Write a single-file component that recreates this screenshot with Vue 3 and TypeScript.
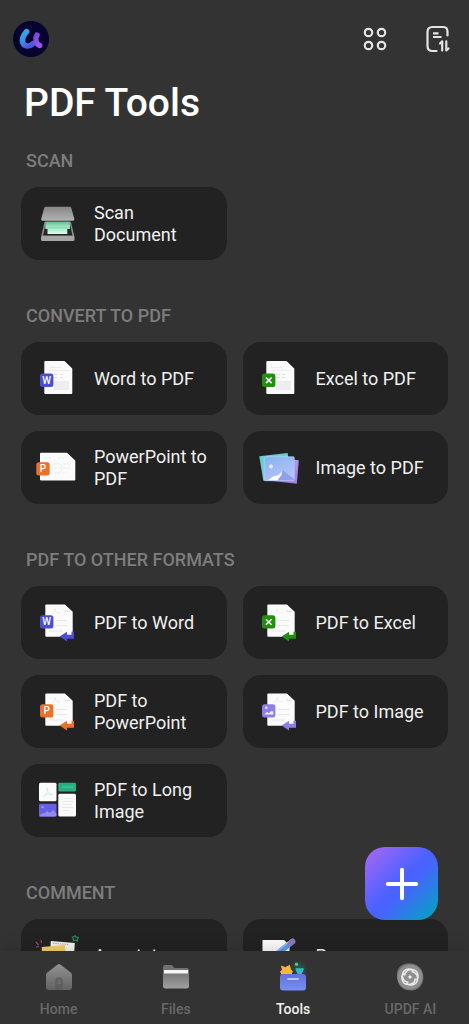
<script setup lang="ts">
interface Tool {
  id: string
  label: string
  kind: 'scan' | 'doc' | 'slide' | 'export' | 'photos' | 'long' | 'note' | 'sign'
  color?: string
  mark?: 'W' | 'X' | 'P' | 'image'
}

interface Section {
  title: string
  tools: Tool[]
}

const blue = '#4c50d0'
const green = '#22900f'
const orange = '#ea7127'
const violet = '#8f7ee6'

const sections: Section[] = [
  { title: 'SCAN', tools: [{ id: 'scan', label: 'Scan Document', kind: 'scan' }] },
  {
    title: 'CONVERT TO PDF',
    tools: [
      { id: 'word-pdf', label: 'Word to PDF', kind: 'doc', color: blue, mark: 'W' },
      { id: 'excel-pdf', label: 'Excel to PDF', kind: 'doc', color: green, mark: 'X' },
      { id: 'ppt-pdf', label: 'PowerPoint to PDF', kind: 'slide', color: orange, mark: 'P' },
      { id: 'image-pdf', label: 'Image to PDF', kind: 'photos' },
    ],
  },
  {
    title: 'PDF TO OTHER FORMATS',
    tools: [
      { id: 'pdf-word', label: 'PDF to Word', kind: 'export', color: blue, mark: 'W' },
      { id: 'pdf-excel', label: 'PDF to Excel', kind: 'export', color: green, mark: 'X' },
      { id: 'pdf-ppt', label: 'PDF to PowerPoint', kind: 'export', color: orange, mark: 'P' },
      { id: 'pdf-image', label: 'PDF to Image', kind: 'export', color: violet, mark: 'image' },
      { id: 'pdf-long', label: 'PDF to Long Image', kind: 'long' },
    ],
  },
  {
    title: 'COMMENT',
    tools: [
      { id: 'annotate', label: 'Annotate', kind: 'note' },
      { id: 'process', label: 'Process', kind: 'sign' },
    ],
  },
]

const badgeOrigin: Record<string, string> = {
  doc: 'translate(4 16.5)',
  slide: 'translate(0.3 16.2)',
  export: 'translate(4 14.2)',
}

const tabs = ['Home', 'Files', 'Tools', 'UPDF AI']
const activeTab = 'Tools'
</script>

<template>
  <div class="app">
    <main class="content">
      <header class="topbar">
        <button class="icon-button" type="button" aria-label="Account">
          <svg width="36" height="36" viewBox="0 0 36 36">
            <defs>
              <linearGradient id="logoA" x1="0.3" y1="0" x2="0.7" y2="1">
                <stop offset="0" stop-color="#35a6ea" />
                <stop offset="0.55" stop-color="#3d8ce8" />
                <stop offset="1" stop-color="#5450e0" />
              </linearGradient>
              <linearGradient id="logoB" x1="0" y1="0" x2="0.4" y2="1">
                <stop offset="0" stop-color="#7746de" />
                <stop offset="1" stop-color="#9c55ea" />
              </linearGradient>
            </defs>
            <circle cx="18" cy="18" r="18" fill="#06042e" />
            <path d="M13.6 10.6C10.5 14 8.6 18.5 10 22C11.5 25.8 16.5 26 20 22.8" fill="none" stroke="url(#logoA)" stroke-width="5.6" stroke-linecap="round" stroke-linejoin="round" />
            <path d="M24 14C22 17 22.3 22.5 26.7 24.5" fill="none" stroke="url(#logoB)" stroke-width="5.4" stroke-linecap="round" />
          </svg>
        </button>
        <div class="actions">
          <button class="icon-button" type="button" aria-label="Grid view">
            <svg width="26" height="26" viewBox="0 0 26 26" fill="none" stroke="#e4e4e4" stroke-width="2.2">
              <circle cx="6.5" cy="6.5" r="3.7" />
              <circle cx="19.5" cy="6.5" r="3.7" />
              <circle cx="6.5" cy="19.5" r="3.7" />
              <circle cx="19.5" cy="19.5" r="3.7" />
            </svg>
          </button>
          <button class="icon-button" type="button" aria-label="Sort">
            <svg width="26" height="28" viewBox="0 0 26 28" fill="none" stroke="#e4e4e4" stroke-width="2.2" stroke-linecap="round" stroke-linejoin="round">
              <path d="M11.5 26H7.5Q2.5 26 2.5 21V7Q2.5 2 7.5 2H18.5Q22.5 2 22.5 7V10.5" />
              <path d="M8 8.3H13.5M8 12H16.5" stroke-linecap="butt" />
              <path d="M15 18.5L17.2 16.3V25.5M21.3 16.3V25.5L23.5 23.5" />
            </svg>
          </button>
        </div>
      </header>

      <h1>PDF Tools</h1>

      <section v-for="section in sections" :key="section.title" class="section">
        <h2>{{ section.title }}</h2>
        <div class="grid">
          <button v-for="tool in section.tools" :key="tool.id" class="card" type="button">
            <svg class="card-icon" width="43" height="43" viewBox="0 0 43 43" aria-hidden="true">
              <template v-if="tool.kind === 'scan'">
                <defs>
                  <linearGradient id="lid" x1="0" y1="0" x2="0" y2="1">
                    <stop offset="0" stop-color="#858585" />
                    <stop offset="1" stop-color="#b4b4b4" />
                  </linearGradient>
                  <linearGradient id="glow" x1="0" y1="0" x2="0" y2="1">
                    <stop offset="0" stop-color="#69b592" />
                    <stop offset="0.45" stop-color="#a5e9c6" />
                    <stop offset="0.5" stop-color="#6ddba5" />
                    <stop offset="0.6" stop-color="#a8efcc" />
                    <stop offset="1" stop-color="#e4f8ee" />
                  </linearGradient>
                </defs>
                <path d="M8.5 20L5 35H38.5L35 20Z" fill="#8d8d8d" />
                <path d="M9.8 20L7.2 33.5H36.3L33.7 20Z" fill="#262626" />
                <path d="M9.3 19.5H34V27H31.3V32H11.5V27H9.3Z" fill="url(#glow)" />
                <path d="M9.8 4.7H33.7Q35 4.7 35.3 6L38.3 16.7Q38.5 18.7 37 18.7H6.5Q5 18.7 5.2 16.7L8.2 6Q8.6 4.7 9.8 4.7Z" fill="url(#lid)" />
                <rect x="5" y="34" width="33.5" height="5" rx="1.5" fill="#a6a6a6" />
              </template>

              <template v-else-if="tool.kind === 'doc'">
                <path d="M9.3 4H28.3L36.3 11.7V36Q36.3 37 35.3 37H9.3Q8.3 37 8.3 36V5Q8.3 4 9.3 4Z" fill="#fbfbfb" />
                <path d="M28.3 4L36.3 11.7H29.3Q28.3 11.7 28.3 10.7Z" fill="#fff" />
                <path d="M13 10.5H25M13 13.5H33" stroke="#ededf0" />
                <path d="M18 17.5H22M24 17.5H27M18 20.5H22M24 20.5H27" stroke="#e2e2e6" />
                <rect x="18" y="24" width="15" height="9" fill="#eeeef0" />
              </template>

              <template v-else-if="tool.kind === 'slide'">
                <path d="M5 6.8H30.7L39.3 14.8V33.5Q39.3 34.5 38.3 34.5H5Q4 34.5 4 33.5V7.8Q4 6.8 5 6.8Z" fill="#fbfbfb" />
                <path d="M30.7 6.8L39.3 14.8H31.7Q30.7 14.8 30.7 13.8Z" fill="#fff" />
                <path d="M8 12H16M22 12H28M18 18H24M27 18H34M18 22H25M27 22H35M18 27H32" stroke="#ebebed" stroke-dasharray="3 1" />
                <circle cx="21" cy="22" r="5" fill="none" stroke="#f0f0f2" />
              </template>

              <template v-else-if="tool.kind === 'export'">
                <path d="M10.3 3.5H28.7L36.7 11V33Q36.7 35.8 34 35.8H10.3Q9.3 35.8 9.3 34.8V4.5Q9.3 3.5 10.3 3.5Z" fill="#fbfbfb" />
                <path d="M28.7 3.5L36.7 11H29.7Q28.7 11 28.7 10Z" fill="#fff" />
                <path d="M16 13C19 12 20 8 19 7.5C18 8 20 12 24 12" stroke="#ebebee" fill="none" />
                <path d="M29 8.5V10.5H34" stroke="#e0e0e4" fill="none" />
                <path d="M20 19.5H31M20 24.5H31M13 30H27" stroke="#e8e8eb" />
                <path d="M23.6 35.6L31 30.8V33.8H35.5V30.8H38V37.7H31V40.6Z" :fill="tool.color" />
              </template>

              <template v-else-if="tool.kind === 'photos'">
                <defs>
                  <linearGradient id="photo" x1="0" y1="0" x2="0.5" y2="1">
                    <stop offset="0" stop-color="#86b2ee" />
                    <stop offset="1" stop-color="#b4c3fb" />
                  </linearGradient>
                  <linearGradient id="photoBack" x1="0" y1="0" x2="0" y2="1">
                    <stop offset="0" stop-color="#b49be8" />
                    <stop offset="1" stop-color="#a27be6" />
                  </linearGradient>
                </defs>
                <path d="M1.3 10.3L29.7 7L32.7 31L5.3 34.8Z" fill="#67cfcc" />
                <path d="M10 10.5L40.8 14.3L38.8 37.8L8 34.3Z" fill="url(#photoBack)" />
                <rect x="6.2" y="10.7" width="30" height="24" rx="1" fill="url(#photo)" stroke="#b7dafb" stroke-width="0.6" />
                <path d="M19 34.3L25 24.5Q30 28 36 33V34.3Z" fill="#8da1ec" />
                <path d="M9.5 34.3C13 33 14 30 17 30C20 30 22 28 24 25L23.5 29L19.5 34.3Z" fill="#fff" />
                <circle cx="13" cy="20.5" r="2" fill="#dcecff" />
              </template>

              <template v-else-if="tool.kind === 'long'">
                <rect x="3" y="3.8" width="17.5" height="18.4" rx="1.5" fill="#fbfbfb" />
                <path d="M7.5 17.5C11 16 12.5 10 11 8.5C10 11 13 15.5 17 15.5C13 14.5 10 15.5 7.5 17.5" stroke="#d9ebe3" fill="none" />
                <rect x="22.3" y="3.8" width="17.7" height="8.7" rx="1.2" fill="#27ae83" />
                <path d="M26 8H37" stroke="#48c59b" stroke-width="1.4" />
                <rect x="3" y="24.8" width="17.5" height="12.7" rx="1.2" fill="#6760e4" />
                <circle cx="6.5" cy="28.2" r="1.1" fill="#a29df5" />
                <path d="M3.5 37C7 32 9 36 11 32L14 34L17 31L20.4 34.5V36.5Q20 37.5 19 37.5H4Z" fill="#938cf0" />
                <rect x="22.3" y="14.8" width="17.7" height="22.7" rx="1.5" fill="#fbfbfb" />
                <path d="M27 19.5H36M25.5 22.5H37M27 25.5H36M25.5 28.5H37M27 31.5H33" stroke="#e8e8ea" />
              </template>

              <template v-else-if="tool.kind === 'note'">
                <path d="M14.8 7L38.8 9L37 40H13Z" fill="#f3f3ee" />
                <path d="M17 9.3L33 10.5" stroke="#a9ad9f" stroke-dasharray="1.5 0.8" />
                <path d="M5.7 13L29 11L31.5 40H7Z" fill="#f4cd6c" />
                <path d="M38.9 1.7L40.4 3.2L42.2 3.5L41.3 5.1L41.4 7L39.4 6.2L37.3 6.8L37.5 4.8L36.3 3.2L38 2.8Z" fill="none" stroke="#258e5a" stroke-width="1.2" />
                <path d="M0 8L2.5 11M5 6L5.5 9M0 13L3 12.5" stroke="#9c4a80" stroke-width="1.2" />
              </template>

              <template v-else>
                <path d="M4.5 6H26L31.5 11V40H4.5Z" fill="#fafafa" />
                <path d="M34.5 7.5L17 21.5" stroke="#5f9be8" stroke-width="5.6" stroke-linecap="round" />
                <path d="M32 7L18 18" stroke="#91c0f3" stroke-width="1.5" />
                <path d="M34.5 7.5L32.8 9" stroke="#9376b8" stroke-width="5.6" stroke-linecap="round" />
              </template>

              <g v-if="tool.mark" :transform="badgeOrigin[tool.kind]">
                <rect width="13.4" height="13.4" rx="2.5" :fill="tool.color" />
                <path v-if="tool.mark === 'X'" d="M4 4L9.6 9.6M9.6 4L4 9.6" stroke="#fff" stroke-width="1.5" />
                <g v-else-if="tool.mark === 'image'" fill="#f1edff">
                  <circle cx="4.3" cy="3.6" r="1.2" />
                  <path d="M2.3 10.3L5 7.8L7 9L9.2 6.7L11.3 7.3V10.3Z" />
                </g>
                <text v-else class="mark" x="6.7" y="10.2" text-anchor="middle">{{ tool.mark }}</text>
              </g>
            </svg>
            <span>{{ tool.label }}</span>
          </button>
        </div>
      </section>
    </main>

    <button class="fab" type="button" aria-label="Add">
      <svg width="34" height="34" viewBox="0 0 34 34" stroke="#fff" stroke-width="4" stroke-linecap="round">
        <path d="M17 2.8V31.2M2.8 17H31.2" />
      </svg>
    </button>

    <nav class="tabbar">
      <button v-for="tab in tabs" :key="tab" type="button" class="tab" :class="{ active: tab === activeTab }">
        <svg width="34" height="34" viewBox="0 0 34 34" aria-hidden="true">
          <template v-if="tab === 'Home'">
            <defs>
              <linearGradient id="home" x1="0" y1="0" x2="0" y2="1">
                <stop offset="0" stop-color="#929292" />
                <stop offset="1" stop-color="#626262" />
              </linearGradient>
            </defs>
            <path d="M15.3 4.7Q17 3.5 18.7 4.7L28.7 12.5Q30 13.7 30 15V27Q30 30 27 30H7Q4 30 4 27V15Q4 13.7 5.3 12.5Z" fill="url(#home)" />
            <path d="M13.3 30V21Q13.3 17.3 17 17.3Q20.7 17.3 20.7 21V30Z" fill="#585858" opacity="0.7" />
            <path d="M15.3 24V21.5Q15.3 19.5 17 19.5Q18.7 19.5 18.7 21.5V24Z" fill="#777" opacity="0.6" />
          </template>
          <template v-else-if="tab === 'Files'">
            <defs>
              <linearGradient id="folder" x1="0" y1="0" x2="0" y2="1">
                <stop offset="0" stop-color="#777" />
                <stop offset="1" stop-color="#a0a0a0" />
              </linearGradient>
            </defs>
            <path d="M4 7Q4 5 6 5H12Q13.5 5 14.3 6.5L15.2 8H28Q30 8 30 10V20H4Z" fill="#717171" />
            <rect x="5" y="10" width="24" height="8" fill="#f5f5f5" />
            <path d="M4 14.5Q4 13.5 5 13.5H29Q30 13.5 30 14.5V26Q30 28.5 27.5 28.5H6.5Q4 28.5 4 26Z" fill="url(#folder)" />
          </template>
          <template v-else-if="tab === 'Tools'">
            <defs>
              <linearGradient id="box" x1="0" y1="0" x2="0" y2="1">
                <stop offset="0" stop-color="#6370d8" />
                <stop offset="1" stop-color="#7690f4" />
              </linearGradient>
              <radialGradient id="shine">
                <stop offset="0" stop-color="#1f9a86" stop-opacity="0.4" />
                <stop offset="1" stop-color="#1f9a86" stop-opacity="0" />
              </radialGradient>
            </defs>
            <circle cx="23" cy="9" r="9" fill="url(#shine)" />
            <path d="M5.5 6.2L9.2 7.6L13.6 5.5L14.3 9L16.3 11.4L14.5 16H6.5L4.5 11.5L6.5 10Z" fill="#f5b936" stroke="#f5b936" stroke-linejoin="round" />
            <path d="M19.8 8.8H27.5L24.8 15H22.5Z" fill="#27bfc5" stroke="#27bfc5" stroke-linejoin="round" />
            <circle cx="20.5" cy="4.3" r="1.7" fill="#47cb83" />
            <path d="M4 17Q4 14 7 14H27Q30 14 30 17V27.5Q30 30.5 27 30.5H7Q4 30.5 4 27.5Z" fill="url(#box)" />
            <path d="M12 19H22" stroke="#b9c4fa" stroke-width="1.8" stroke-linecap="round" />
          </template>
          <template v-else>
            <path d="M10 4.5C17 1.5 27 4 29.5 12C32 20 29 28 22 30C13 32 6 28 4.5 20C3 14 4 7 10 4.5Z" fill="#6c6c6c" />
            <circle cx="17" cy="17" r="12.6" fill="#8f8f8f" />
            <g fill="none" stroke="#ececec" stroke-width="1.4">
              <path d="M11.5 15.5C13 7.5 23.5 7.5 25 15C25.5 17.5 24.5 19.5 22.5 20.5" />
              <path d="M18.5 11.5C26.5 13 26.5 23.5 19 25C16.5 25.5 14.5 24.5 13.5 22.5" />
              <path d="M22.5 18.5C21 26.5 10.5 26.5 9 19C8.5 16.5 9.5 14.5 11.5 13.5" />
              <path d="M15.5 22.5C7.5 21 7.5 10.5 15 9C17.5 8.5 19.5 9.5 20.5 11.5" />
            </g>
            <path d="M17 14.5L17.7 16.3L19.5 17L17.7 17.7L17 19.5L16.3 17.7L14.5 17L16.3 16.3Z" fill="#fff" />
          </template>
        </svg>
        <span>{{ tab }}</span>
      </button>
    </nav>
  </div>
</template>

<style>
body {
  margin: 0;
  background: #333333;
}
</style>

<style scoped>
.app {
  position: relative;
  display: flex;
  flex-direction: column;
  height: 100vh;
  background: #333333;
  color: #f0f0f0;
  font-family: Roboto, "Noto Sans", sans-serif;
}

button {
  margin: 0;
  padding: 0;
  border: 0;
  background: none;
  color: inherit;
  font: inherit;
  cursor: pointer;
}

svg {
  display: block;
  flex: none;
}

.content {
  flex: 1;
  min-height: 0;
  overflow-y: auto;
  scrollbar-width: none;
}

.topbar {
  display: flex;
  align-items: center;
  justify-content: space-between;
  padding: 21px 18px 0 13px;
}

.actions {
  display: flex;
  align-items: center;
  gap: 37px;
}

h1 {
  margin: 22px 24px 0;
  color: #ffffff;
  font-size: 39px;
  line-height: 48px;
  font-weight: 500;
}

.section {
  padding: 0 21px;
  margin-bottom: 46px;
}

h1 + .section {
  margin-top: 24px;
}

h2 {
  margin: 0 5px 16px;
  color: #7d7d7d;
  font-size: 18px;
  line-height: 20px;
  font-weight: 500;
}

.grid {
  display: grid;
  grid-template-columns: 1fr 1fr;
  gap: 16px;
}

.card {
  display: flex;
  align-items: center;
  gap: 15px;
  min-height: 73px;
  padding: 0 15px;
  border-radius: 18px;
  background: #222222;
  font-size: 18px;
  line-height: 22px;
  text-align: left;
}

.card-icon {
  overflow: visible;
}

.mark {
  fill: #ffffff;
  font-size: 10px;
  font-weight: 500;
}

.fab {
  position: absolute;
  right: 31px;
  bottom: 104px;
  display: flex;
  align-items: center;
  justify-content: center;
  width: 73px;
  height: 73px;
  border-radius: 20px;
  background: linear-gradient(135deg, #9b66f5 8%, #4a62ff 48%, #4a62ff 55%, #089dc8 92%);
}

.tabbar {
  position: relative;
  display: grid;
  grid-template-columns: repeat(4, 1fr);
  background: #333333;
  box-shadow: 0 -2px 16px rgba(0, 0, 0, 0.14);
}

.tab {
  display: flex;
  flex-direction: column;
  align-items: center;
  gap: 6px;
  padding: 9px 0 6px;
  color: #686868;
  font-size: 14px;
  line-height: 18px;
  font-weight: 500;
}

.tab.active {
  color: #f0f0f0;
}
</style>
